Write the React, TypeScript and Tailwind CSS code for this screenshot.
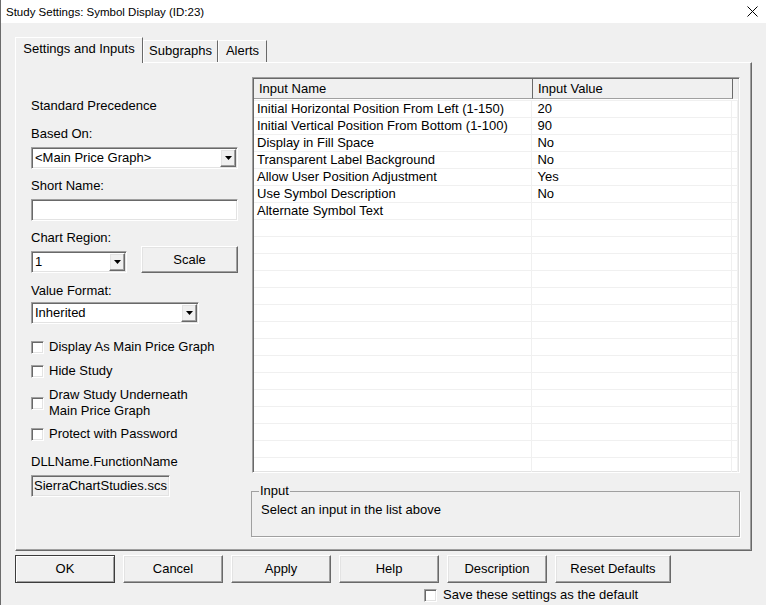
import React from "react";

const sunken =
  "border border-t-[#a0a0a0] border-l-[#a0a0a0] border-r-white border-b-white shadow-[inset_1px_1px_0_#696969,inset_-1px_-1px_0_#e3e3e3]";
const raised =
  "border border-t-white border-l-white border-r-[#696969] border-b-[#696969] shadow-[inset_-1px_-1px_0_#a0a0a0,inset_1px_1px_0_#e3e3e3]";

function Arrow() {
  return (
    <svg width="7" height="4" viewBox="0 0 7 4">
      <path d="M0 0 H7 L3.5 4 Z" fill="#000" />
    </svg>
  );
}

function Select({ text, w }: { text: string; w: string }) {
  return (
    <div className={`${sunken} ${w} h-[22px] bg-white p-[1px] flex items-stretch`}>
      <span className="flex-1 pl-[2px] leading-[18px] whitespace-nowrap overflow-hidden">{text}</span>
      <div className={`${raised} w-[16px] bg-[#f0f0f0] flex items-center justify-center`}>
        <Arrow />
      </div>
    </div>
  );
}

function Check({ label, mt }: { label: React.ReactNode; mt: string }) {
  return (
    <div className={`flex items-center ${mt}`}>
      <div className={`${sunken} w-[13px] h-[13px] bg-white shrink-0`} />
      <div className="ml-[5px] leading-[16px]">{label}</div>
    </div>
  );
}

const rows: [string, string][] = [
  ["Initial Horizontal Position From Left (1-150)", "20"],
  ["Initial Vertical Position From Bottom (1-100)", "90"],
  ["Display in Fill Space", "No"],
  ["Transparent Label Background", "No"],
  ["Allow User Position Adjustment", "Yes"],
  ["Use Symbol Description", "No"],
  ["Alternate Symbol Text", ""],
];
while (rows.length < 23) rows.push(["", ""]);

const buttons: [string, string][] = [
  ["OK", "w-[100px]"],
  ["Cancel", "w-[100px]"],
  ["Apply", "w-[100px]"],
  ["Help", "w-[100px]"],
  ["Description", "w-[100px]"],
  ["Reset Defaults", "w-[116px]"],
];

export default function App() {
  return (
    <div className="w-[766px] h-[605px] bg-[#f0f0f0] border-l border-[#6b6b6b] flex flex-col overflow-hidden text-[13px] text-black font-['Liberation_Sans',Arial,sans-serif]">
      {/* Title bar */}
      <div className="h-[23px] bg-white flex items-center justify-between pl-[5px] pr-[8px] shrink-0">
        <span className="text-[11.5px] leading-[16px]">Study Settings: Symbol Display (ID:23)</span>
        <svg width="11" height="11" viewBox="0 0 11 11" className="mt-[-1px]">
          <path d="M0.5 0.5 L10.5 10.5 M10.5 0.5 L0.5 10.5" stroke="#000" strokeWidth="1" />
        </svg>
      </div>

      {/* Tabs + panel */}
      <div className="pl-[14px] pt-[14px] flex flex-col">
        <div className="h-[25px] flex items-end">
          <div className="relative z-10 -mb-px h-[26px] w-[128px] bg-[#f0f0f0] border-t border-l border-white border-r border-r-[#696969] flex justify-center pt-[3px] leading-[16px]">
            Settings and Inputs
          </div>
          <div className="h-[22px] w-[75px] border-t border-l border-white border-r border-r-[#696969] flex justify-center pt-[2px] leading-[16px]">
            Subgraphs
          </div>
          <div className="h-[22px] w-[49px] border-t border-l border-white border-r border-r-[#696969] flex justify-center pt-[2px] leading-[16px]">
            Alerts
          </div>
        </div>
        <div className="w-[737px] h-[489px] border-t border-l border-white border-r border-b border-r-[#696969] border-b-[#696969] shadow-[inset_-1px_-1px_0_#a0a0a0] flex items-start pl-[15px]">
          {/* Left column */}
          <div className="w-[207px] pt-[35px] flex flex-col">
            <div className="leading-[16px]">Standard Precedence</div>
            <div className="leading-[16px] mt-[12px]">Based On:</div>
            <div className="mt-[5px]">
              <Select text="<Main Price Graph>" w="w-[207px]" />
            </div>
            <div className="leading-[16px] mt-[9px]">Short Name:</div>
            <div className={`${sunken} mt-[5px] w-[207px] h-[22px] bg-white`} />
            <div className="leading-[16px] mt-[9px]">Chart Region:</div>
            <div className="flex items-start h-[27px]">
              <div className="mt-[5px]">
                <Select text="1" w="w-[96px]" />
              </div>
              <button className={`${raised} ml-[14px] w-[97px] h-[27px] bg-[#f0f0f0] leading-[16px]`}>Scale</button>
            </div>
            <div className="leading-[16px] mt-[10px]">Value Format:</div>
            <div className="mt-[3px]">
              <Select text="Inherited" w="w-[168px]" />
            </div>
            <Check mt="mt-[15px]" label="Display As Main Price Graph" />
            <Check mt="mt-[8px]" label="Hide Study" />
            <Check
              mt="mt-[8px]"
              label={
                <>
                  Draw Study Underneath
                  <br />
                  Main Price Graph
                </>
              }
            />
            <Check mt="mt-[7px]" label="Protect with Password" />
            <div className="leading-[16px] mt-[12px]">DLLName.FunctionName</div>
            <div className={`${sunken} mt-[5px] w-[139px] h-[22px] bg-[#f0f0f0] whitespace-nowrap pl-[2px] leading-[19px]`}>
              SierraChartStudies.scs
            </div>
          </div>

          {/* Right column */}
          <div className="ml-[14px] pt-[14px] flex flex-col">
            <div className={`${sunken} w-[488px] h-[396px] bg-white p-[1px] overflow-hidden`}>
              <div className="flex h-[20px] bg-[#f0f0f0]">
                <div className="w-[279px] border-r border-b border-r-[#696969] border-b-[#a0a0a0] pl-[5px] leading-[19px]">
                  Input Name
                </div>
                <div className="w-[200px] border-r border-b border-r-[#696969] border-b-[#a0a0a0] pl-[5px] leading-[19px]">
                  Input Value
                </div>
                <div className="flex-1" />
              </div>
              <div className="h-[1px] bg-white" />
              <div className="border-t border-[#f0f0f0]">
                {rows.map(([n, v], i) => (
                  <div key={i} className="flex h-[17px] border-b border-[#f0f0f0]">
                    <div className="w-[279px] border-r border-[#f0f0f0] pl-[3px] leading-[16px] whitespace-nowrap">{n}</div>
                    <div className="w-[200px] border-r border-[#f0f0f0] pl-[5px] leading-[16px]">{v}</div>
                    <div className="w-[6px] border-r border-[#f0f0f0]" />
                  </div>
                ))}
              </div>
            </div>
            <div className="relative mt-[18px] ml-[-1px] w-[489px] h-[46px] border border-[#a0a0a0] shadow-[1px_1px_0_#ffffff] pl-[9px] pt-[10px]">
              <span className="absolute left-[7px] top-[-9px] px-[1px] bg-[#f0f0f0] leading-[16px]">Input</span>
              <div className="leading-[16px]">Select an input in the list above</div>
            </div>
          </div>
        </div>

        {/* Buttons */}
        <div className="mt-[4px] flex gap-[8px]">
          {buttons.map(([t, w], i) => (
            <button
              key={t}
              className={`${w} h-[28px] bg-[#f0f0f0] leading-[16px] ${
                i === 0
                  ? "border border-[#3c3c3c] shadow-[inset_1px_1px_0_#ffffff,inset_-1px_-1px_0_#a0a0a0]"
                  : raised
              }`}
            >
              {t}
            </button>
          ))}
        </div>
      </div>
      <div className="mt-[4px] pl-[423px] flex items-center">
        <div className={`${sunken} w-[13px] h-[13px] bg-white`} />
        <div className="ml-[6px] leading-[16px]">Save these settings as the default</div>
      </div>
    </div>
  );
}
